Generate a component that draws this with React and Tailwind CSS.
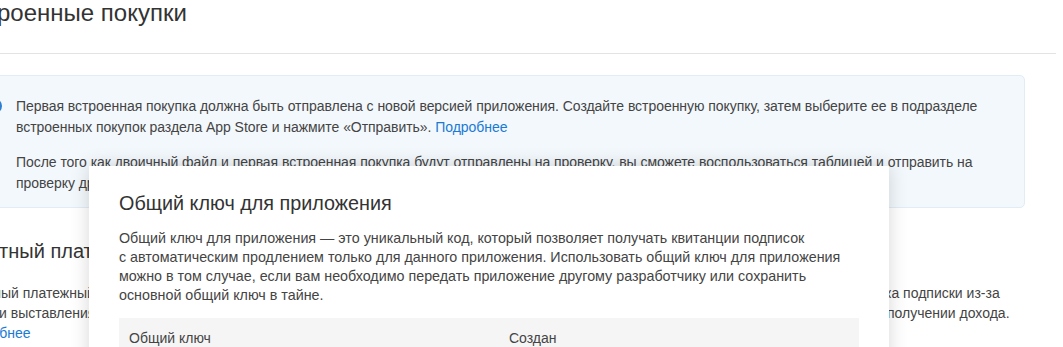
import React from 'react';

function InfoIcon() {
  return (
    <svg viewBox="0 0 16 16" className="h-4 w-4 shrink-0">
      <circle cx="8" cy="8" r="8" fill="#2d7dd2" />
      <rect x="7" y="7" width="2" height="5" rx="1" fill="#fff" />
      <circle cx="8" cy="4.6" r="1.1" fill="#fff" />
    </svg>
  );
}

function Modal() {
  return (
    <div className="absolute left-[89px] top-[166px] w-[800px] h-[260px] bg-white px-[30px] pt-[25px] shadow-[0_0_18px_rgba(0,0,0,0.16)]">
      <h2 className="text-[19.8px] leading-[24px] font-medium text-[#333]">Общий ключ для приложения</h2>
      <p className="mt-[14px] text-[14.3px] leading-[19px] text-[#444]">
        Общий ключ для приложения — это уникальный код, который позволяет получать квитанции подписок<br />
        с автоматическим продлением только для данного приложения. Использовать общий ключ для приложения<br />
        можно в том случае, если вам необходимо передать приложение другому разработчику или сохранить<br />
        основной общий ключ в тайне.
      </p>
      <div className="mt-[13px] grid grid-cols-[380px_1fr] h-[40px] items-center bg-[#f5f5f5] px-[10px] text-[14px] text-[#444]">
        <span>Общий ключ</span>
        <span>Создан</span>
      </div>
    </div>
  );
}

export default function App() {
  return (
    <div className="relative w-[1063px] h-[347px] overflow-hidden bg-white font-['Liberation_Sans',Arial,sans-serif] text-[#333]">
      <div className="ml-[-42px] w-[1098px]">
        <h1 className="h-[54px] text-[24px] leading-[26px] text-[#333] border-b border-[#e3e3e3]">Встроенные покупки</h1>

        <div className="mt-[21px] mr-[31px] flex gap-[14px] rounded-[5px] border border-[#e1ecf7] bg-[#f3f8fd] pl-[27px] pr-[16px] pt-[20px] pb-[13px] text-[14px] leading-[21px] text-[#444]">
          <div className="pt-[2px]"><InfoIcon /></div>
          <div className="tracking-[-0.05px]">
            <p>
              Первая встроенная покупка должна быть отправлена с новой версией приложения. Создайте встроенную покупку, затем выберите ее в подразделе<br />
              встроенных покупок раздела App Store и нажмите «Отправить». <span className="text-[#1a7ad4]">Подробнее</span>
            </p>
            <p className="mt-[14px]">
              После того как двоичный файл и первая встроенная покупка будут отправлены на проверку, вы сможете воспользоваться таблицей и отправить на<br />
              проверку другие встроенные покупки.
            </p>
          </div>
        </div>

        <h2 className="mt-[31px] text-[20px] leading-[24px] text-[#333]">Льготный платежный период</h2>

        <div className="mt-[20px] text-[14px] leading-[20px] text-[#444]">
          <div className="flex whitespace-nowrap">
            <span className="w-[927px] shrink-0 overflow-hidden">Льготный платежный период позволяет подписчикам сохранять доступ к платному контенту, пока выполняется повторная попыт</span>
            <span>ка подписки из-за</span>
          </div>
          <div className="flex whitespace-nowrap">
            <span className="w-[929px] shrink-0 overflow-hidden">ошибки выставления счетов. Включите его, чтобы сократить число случаев прерывания подписки и избежать потерь при п</span>
            <span>получении дохода.</span>
          </div>
          <div>
            <span className="text-[#1a7ad4]">Подробнее</span>
          </div>
        </div>
      </div>

      <Modal />
    </div>
  );
}
